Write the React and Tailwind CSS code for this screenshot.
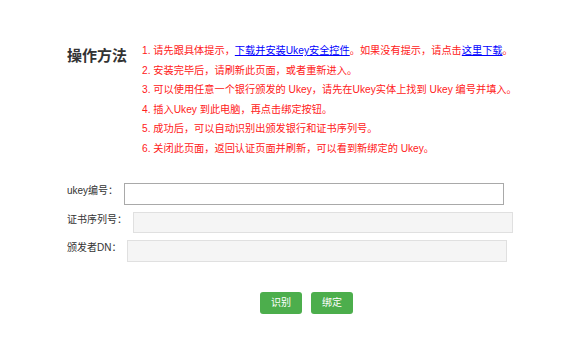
import React from 'react';

const steps = [
  <>1. 请先跟具体提示，<a href="#" className="text-[#0000ff] underline">下载并安装Ukey安全控件</a>。如果没有提示，请点击<a href="#" className="text-[#0000ff] underline">这里下载</a>。</>,
  <>2. 安装完毕后，请刷新此页面，或者重新进入。</>,
  <>3. 可以使用任意一个银行颁发的 Ukey，请先在Ukey实体上找到 Ukey 编号并填入。</>,
  <>4. 插入Ukey 到此电脑，再点击绑定按钮。</>,
  <>5. 成功后，可以自动识别出颁发银行和证书序列号。</>,
  <>6. 关闭此页面，返回认证页面并刷新，可以看到新绑定的 Ukey。</>,
];

const fields = [
  { label: 'ukey编号：', gap: 'ml-[6px]', cls: 'bg-white border-[#a9a9a9] h-[22px]', row: 'mt-0' },
  { label: '证书序列号：', gap: 'ml-[6px]', cls: 'bg-[#f5f5f5] border-[#e0e0e0] h-[21px]', row: 'mt-[7px]' },
  { label: '颁发者DN：', gap: 'ml-[6px]', cls: 'bg-[#f5f5f5] border-[#e0e0e0] h-[22px]', row: 'mt-[7px]' },
];

export default function App() {
  return (
    <div
      className="w-[561px] h-[340px] bg-white text-[#333] overflow-hidden"
      style={{ fontFamily: '"Liberation Sans", "Noto Sans CJK SC", sans-serif' }}
    >
      <div className="flex pt-[41px] pl-[67px]">
        <h2 className="w-[75px] shrink-0 text-[15px] font-bold leading-[20px] mt-[5px] text-[#333]">操作方法</h2>
        <ol className="text-[10.2px] leading-[19.5px] text-[#ff2020] whitespace-nowrap">
          {steps.map((s, i) => (
            <li key={i}>{s}</li>
          ))}
        </ol>
      </div>

      <div className="pl-[67px] mt-[25px]">
        {fields.map((f) => (
          <div key={f.label} className={`flex items-start ${f.row}`}>
            <span className="text-[10px] leading-[16px] text-[#333]">{f.label}</span>
            <div className={`${f.gap} w-[380px] border ${f.cls}`} />
          </div>
        ))}
      </div>

      <div className="flex gap-[9px] pl-[260px] mt-[30px]">
        <button className="w-[42px] h-[22px] rounded-[3px] bg-[#4cae4c] text-white text-[10px] leading-none">识别</button>
        <button className="w-[42px] h-[22px] rounded-[3px] bg-[#4cae4c] text-white text-[10px] leading-none">绑定</button>
      </div>
    </div>
  );
}
